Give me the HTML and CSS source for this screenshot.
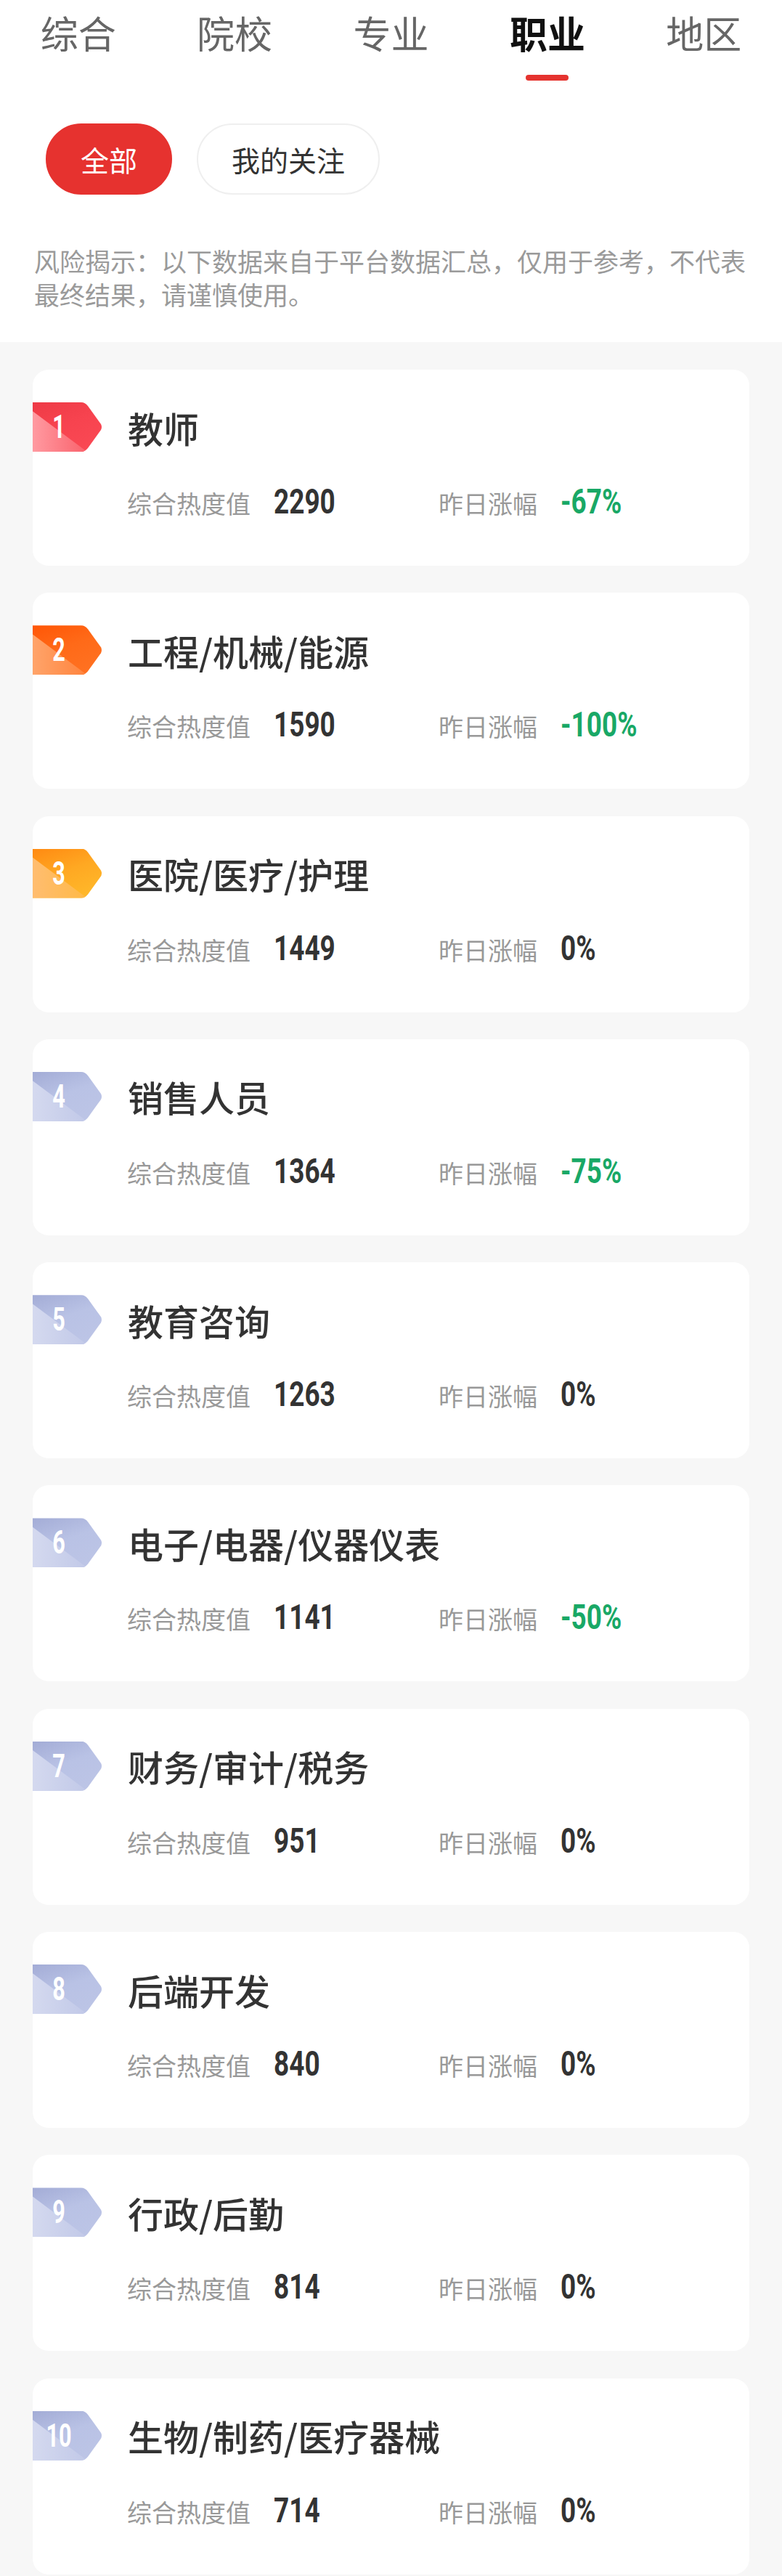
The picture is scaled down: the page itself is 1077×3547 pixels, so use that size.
FILE: index.html
```html
<!DOCTYPE html>
<html lang="zh-CN">
<head>
  <meta charset="UTF-8">
  <meta name="viewport" content="width=device-width, initial-scale=1.0">
  <title>职业热度榜</title>
  <link rel="stylesheet" href="styles.css">
</head>
<body>
  <div class="header">
    <div class="tabs">
      <div class="tab">综合</div>
      <div class="tab">院校</div>
      <div class="tab">专业</div>
      <div class="tab active">职业<span class="tab-line"></span></div>
      <div class="tab">地区</div>
    </div>

    <div class="filters">
      <div class="chip on">全部</div>
      <div class="chip">我的关注</div>
    </div>

    <p class="notice">风险揭示：以下数据来自于平台数据汇总，仅用于参考，不代表最终结果，请谨慎使用。</p>
  </div>

  <div class="rank-list">
    <div class="card">
      <div class="card-head">
        <div class="rank rank-1"><span>1</span></div>
        <h3 class="title">教师</h3>
      </div>
      <div class="stats">
        <div class="stat"><span class="label">综合热度值</span><span class="num">2290</span></div>
        <div class="stat"><span class="label">昨日涨幅</span><span class="num down">-67%</span></div>
      </div>
    </div>

    <div class="card">
      <div class="card-head">
        <div class="rank rank-2"><span>2</span></div>
        <h3 class="title">工程/机械/能源</h3>
      </div>
      <div class="stats">
        <div class="stat"><span class="label">综合热度值</span><span class="num">1590</span></div>
        <div class="stat"><span class="label">昨日涨幅</span><span class="num down">-100%</span></div>
      </div>
    </div>

    <div class="card">
      <div class="card-head">
        <div class="rank rank-3"><span>3</span></div>
        <h3 class="title">医院/医疗/护理</h3>
      </div>
      <div class="stats">
        <div class="stat"><span class="label">综合热度值</span><span class="num">1449</span></div>
        <div class="stat"><span class="label">昨日涨幅</span><span class="num">0%</span></div>
      </div>
    </div>

    <div class="card">
      <div class="card-head">
        <div class="rank"><span>4</span></div>
        <h3 class="title">销售人员</h3>
      </div>
      <div class="stats">
        <div class="stat"><span class="label">综合热度值</span><span class="num">1364</span></div>
        <div class="stat"><span class="label">昨日涨幅</span><span class="num down">-75%</span></div>
      </div>
    </div>

    <div class="card">
      <div class="card-head">
        <div class="rank"><span>5</span></div>
        <h3 class="title">教育咨询</h3>
      </div>
      <div class="stats">
        <div class="stat"><span class="label">综合热度值</span><span class="num">1263</span></div>
        <div class="stat"><span class="label">昨日涨幅</span><span class="num">0%</span></div>
      </div>
    </div>

    <div class="card">
      <div class="card-head">
        <div class="rank"><span>6</span></div>
        <h3 class="title">电子/电器/仪器仪表</h3>
      </div>
      <div class="stats">
        <div class="stat"><span class="label">综合热度值</span><span class="num">1141</span></div>
        <div class="stat"><span class="label">昨日涨幅</span><span class="num down">-50%</span></div>
      </div>
    </div>

    <div class="card">
      <div class="card-head">
        <div class="rank"><span>7</span></div>
        <h3 class="title">财务/审计/税务</h3>
      </div>
      <div class="stats">
        <div class="stat"><span class="label">综合热度值</span><span class="num">951</span></div>
        <div class="stat"><span class="label">昨日涨幅</span><span class="num">0%</span></div>
      </div>
    </div>

    <div class="card">
      <div class="card-head">
        <div class="rank"><span>8</span></div>
        <h3 class="title">后端开发</h3>
      </div>
      <div class="stats">
        <div class="stat"><span class="label">综合热度值</span><span class="num">840</span></div>
        <div class="stat"><span class="label">昨日涨幅</span><span class="num">0%</span></div>
      </div>
    </div>

    <div class="card">
      <div class="card-head">
        <div class="rank"><span>9</span></div>
        <h3 class="title">行政/后勤</h3>
      </div>
      <div class="stats">
        <div class="stat"><span class="label">综合热度值</span><span class="num">814</span></div>
        <div class="stat"><span class="label">昨日涨幅</span><span class="num">0%</span></div>
      </div>
    </div>

    <div class="card">
      <div class="card-head">
        <div class="rank"><span>10</span></div>
        <h3 class="title">生物/制药/医疗器械</h3>
      </div>
      <div class="stats">
        <div class="stat"><span class="label">综合热度值</span><span class="num">714</span></div>
        <div class="stat"><span class="label">昨日涨幅</span><span class="num">0%</span></div>
      </div>
    </div>
  </div>
</body>
</html>
```

FILE: styles.css
```css
body {
  margin: 0;
  font-family: "Noto Sans CJK SC", "Noto Sans", sans-serif;
  background-color: #f7f7f7;
}

/* Header: tabs, filter chips, notice */
.header {
  background-color: #fff;
  padding-bottom: 43px;
}

.tabs {
  display: flex;
}

.tab {
  flex: 1;
  display: flex;
  flex-direction: column;
  align-items: center;
  height: 111px;
  font-size: 52px;
  line-height: 90px;
  color: #666;
}

.tab.active {
  color: #111;
  font-weight: 700;
}

.tab-line {
  width: 59px;
  height: 8px;
  margin-top: 13px;
  border-radius: 4px;
  background-color: #e5332f;
}

.filters {
  display: flex;
  gap: 34px;
  padding: 59px 0 0 63px;
}

.chip {
  display: flex;
  align-items: center;
  box-sizing: border-box;
  height: 98px;
  padding: 0 46px;
  border: 2px solid #efefef;
  border-radius: 49px;
  background-color: #fff;
  font-size: 39px;
  color: #333;
}

.chip.on {
  background-color: #e6322f;
  border-color: #e6322f;
  color: #fff;
}

.notice {
  margin: 68px 47px 0;
  font-size: 35px;
  line-height: 46px;
  color: #9a9a9a;
}

/* Ranking cards */
.rank-list {
  display: flex;
  flex-direction: column;
  gap: 37.3px;
  padding: 38px 45px 0;
}

.card {
  box-sizing: border-box;
  height: 270px;
  padding-top: 45px;
  border-radius: 22px;
  background-color: #fff;
}

.card-head {
  display: flex;
  align-items: center;
  height: 68px;
}

.rank {
  position: relative;
  display: flex;
  align-items: center;
  width: 96px;
  height: 68px;
  flex-shrink: 0;
  clip-path: path('M0 0 H67 Q72 0 76 5 L94 30 Q96 34 94 38 L76 63 Q72 68 67 68 H0 Z');
  background: linear-gradient(160deg, #a3acd6 0%, #b9c2e5 45%, #bdc5e6 100%);
}

/* lighter lower-left facet */
.rank::before {
  content: '';
  position: absolute;
  inset: 0;
  clip-path: polygon(0 18%, 78% 100%, 0 100%);
  background: linear-gradient(to right, #d4d9ef, #bcc4e6);
}

.rank span {
  position: relative;
  width: 72px;
  text-align: center;
  font-family: Roboto, "Liberation Sans", sans-serif;
  font-weight: 700;
  font-size: 45px;
  line-height: 68px;
  color: #fff;
  transform: scaleX(0.68);
}

.rank-1 {
  background: linear-gradient(160deg, #ee3a46 0%, #f7434f 45%, #fa4a55 100%);
}

.rank-1::before {
  background: linear-gradient(to right, #ff9aa1, #f8525d);
}

.rank-2 {
  background: linear-gradient(160deg, #ff5606 0%, #ff6a18 45%, #ff7324 100%);
}

.rank-2::before {
  background: linear-gradient(to right, #ffa46a, #ff7a30);
}

.rank-3 {
  background: linear-gradient(160deg, #ff8a12 0%, #ffa822 45%, #ffbc2c 100%);
}

.rank-3::before {
  background: linear-gradient(to right, #ffbd70, #ffb83a);
}

.title {
  margin: 0 0 0 35px;
  font-size: 49px;
  font-weight: 500;
  color: #333;
}

.stats {
  display: flex;
  align-items: baseline;
  margin: 45px 0 0 130px;
}

.stat {
  display: flex;
  align-items: baseline;
  gap: 32px;
}

.stat:first-child {
  width: 429px;
}

.label {
  font-size: 34px;
  line-height: 48px;
  color: #999;
}

/* condensed figures: no narrow face is installed, so squeeze Roboto */
.num {
  display: inline-block;
  font-family: Roboto, "Liberation Sans", sans-serif;
  font-weight: 700;
  font-size: 48px;
  line-height: 48px;
  color: #333;
  transform: scaleX(0.77);
  transform-origin: left center;
}

.num.down {
  color: #19a866;
}
```
